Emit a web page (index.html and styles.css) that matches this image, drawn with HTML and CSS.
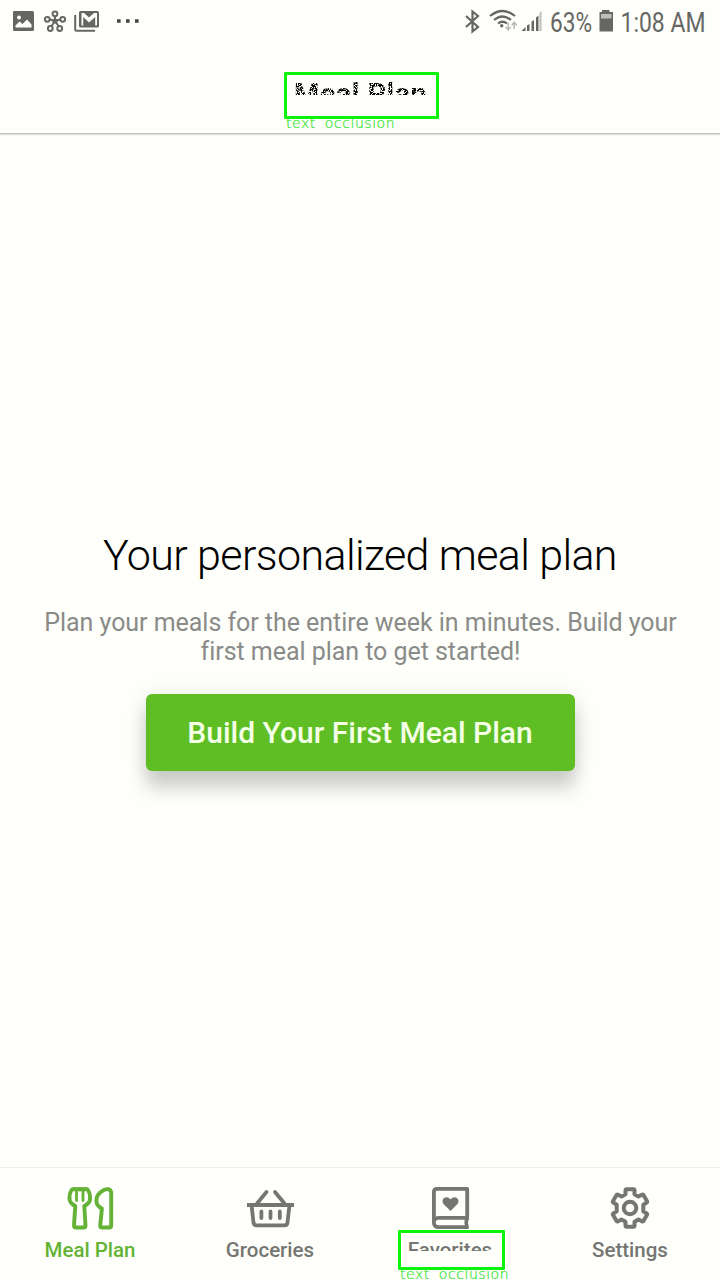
FILE: index.html
```
<!DOCTYPE html>
<html lang="en">
<head>
<meta charset="utf-8">
<meta name="viewport" content="width=device-width, initial-scale=1">
<title>Meal Plan</title>
<link rel="stylesheet" href="styles.css">
</head>
<body>
<svg class="defs" width="0" height="0">
  <filter id="speckle" x="0" y="0" width="100%" height="100%" color-interpolation-filters="sRGB">
    <feTurbulence type="fractalNoise" baseFrequency="0.85" numOctaves="1" seed="4"/>
    <feColorMatrix values="0 0 0 0 0  0 0 0 0 0  0 0 0 0 0  12 0 0 0 -5"/>
    <feComposite in2="SourceAlpha" operator="in"/>
  </filter>
</svg>
<div class="app">
  <header class="top">
    <div class="status">
      <svg class="status-left" width="150" height="44" viewBox="0 0 150 44" fill="none" stroke="#666765">
        <path fill="#666765" stroke="none" fill-rule="evenodd" d="M14 11h18.500a1.500 1.500 0 0 1 1.500 1.500v17a1.500 1.500 0 0 1-1.500 1.500H14.500a1.500 1.500 0 0 1-1.500-1.500v-17a1.500 1.500 0 0 1 1-1.500zM15.500 27.500h16v-3l-4.500-5-4.500 4.500-3-2.500-4 4zM19 15.500a2 2 0 1 0 0 4 2 2 0 0 0 0-4z"/>
        <g stroke-width="2">
          <path d="M55 21v-4M55 21l-5-1.500M55 21l5-1.500M55 21l-3.500 5M55 21l3.500 5"/>
          <circle cx="55" cy="13.800" r="2.400"/><circle cx="47.300" cy="19.300" r="2.400"/><circle cx="62.700" cy="19.300" r="2.400"/><circle cx="50.300" cy="28.500" r="2.400"/><circle cx="59.700" cy="28.500" r="2.400"/>
          <circle cx="55" cy="21" r="1.600" fill="#666765"/>
        </g>
        <path stroke-width="2" d="M75.200 15v14.500q0 1.300 1.300 1.300H95"/>
        <rect x="79" y="11" width="20" height="16.500" rx="1.500" fill="#666765" stroke="none"/>
        <path fill="#fefffa" stroke="none" d="M81.500 13h2.500l5 4.500 5-4.500h3v12.500h-1.800V17L89 22.500 83.200 17v8.500h-1.700z"/>
        <path fill="#444" stroke="none" d="M117 19.200h3.600v3.600H117zM126 19.200h3.600v3.600H126zM135 19.200h3.600v3.600H135z"/>
      </svg>
      <svg class="status-right" width="270" height="44" viewBox="450 0 270 44" fill="none" stroke="#666765">
        <path stroke-width="2.200" d="M466 16l12 11-5.500 4.500v-20L478 16l-12 11"/>
        <path stroke-width="2.200" d="M490 16q12.500-10 25 0M494 20q8.500-7 17 0M498 23.500q4.500-3.500 9 0"/>
        <circle cx="501.700" cy="25.700" r="1.700" fill="#666765" stroke="none"/>
        <path stroke="#b8b9b6" stroke-width="1.500" d="M508.200 22.500v7M505.600 27l2.600 2.800 2.600-2.800M514.200 29v-6.500M511.600 25.200l2.600-2.800 2.600 2.800"/>
        <path fill="#666765" stroke="none" d="M521.500 31l4-4v4zM527 25.500l2.500-1.500v7H527zM531.500 21.500l2.500-1.500v11h-2.500zM536 17.500l2.500-2v15.500H536z"/>
        <path fill="#bebfbc" stroke="none" d="M539.500 13l2-2v20h-2z"/>
        <text class="status-text" x="550" y="31.500" textLength="42" lengthAdjust="spacingAndGlyphs">63%</text>
        <path fill="#666765" stroke="none" d="M602 10h7.500v2h3.500v19.500h-13.500V12h2.500z"/>
        <path fill="#bebfbc" stroke="none" d="M601 14h10.500v4.500H601z"/>
        <text class="status-text" x="620.500" y="31.500" textLength="85" lengthAdjust="spacingAndGlyphs">1:08 AM</text>
      </svg>
    </div>
    <div class="title-clip"><h1 class="title">Meal Plan</h1></div>
    <div class="mark mark-title"><span class="mark-label">text occlusion</span></div>
  </header>
  <main class="content">
    <h2 class="heading">Your personalized meal plan</h2>
    <p class="desc">Plan your meals for the entire week in minutes. Build your<br>first meal plan to get started!</p>
    <button class="cta" type="button">Build Your First Meal Plan</button>
  </main>
  <nav class="tabs">
    <a class="tab active">
      <svg width="60" height="48" viewBox="60 1184 60 48" fill="none" stroke="#65b336" stroke-width="3.900" stroke-linejoin="round" stroke-linecap="round">
        <path d="M72 1189.500q-3.500 5-2.200 11 1 3.500 5.500 5.500L74 1225.500q0 2 2 2h7.500q2 0 2-2L84.300 1206q4.500-2 5.500-5.500 1.200-6-2.200-11-2.200-1.200-3.600.2-2-1.500-4-.2-2-1.300-4 .2-1.600-1.400-4-.2z"/>
        <path stroke-width="2.800" d="M76.500 1190v10.500M83 1190v10.500"/>
        <path d="M111.200 1192v33.500q0 2-2 2h-7q-2 0-2-2l1.700-17q-5.500-2.500-5.500-8 0-6.500 7.500-10.500 5.500-2.500 7.300 2z"/>
      </svg>
      <span class="tab-name">Meal Plan</span>
    </a>
    <a class="tab">
      <svg width="60" height="48" viewBox="240 1184 60 48" fill="none" stroke="#757673" stroke-width="3.800">
        <path d="M247 1205h47M251.500 1205l2 17.500q.3 2.800 3 2.800h28q2.700 0 3-2.800l2-17.500"/>
        <path stroke-linecap="round" d="M257 1203.500l9.500-11.500M284.500 1203.500l-9.500-11.500M261.400 1211.500v6.500M270.500 1211.500v6.500M279.800 1211.500v6.500"/>
      </svg>
      <span class="tab-name">Groceries</span>
    </a>
    <a class="tab">
      <svg width="60" height="48" viewBox="420 1184 60 48" fill="none" stroke="#757673" stroke-width="3.800">
        <path stroke-linejoin="round" d="M467.200 1217.800V1188.900H437q-3.100 0-3.100 3.100v30.500q0 4.700 4.700 4.700h30.100M469 1217.800h-30.500q-4.600 0-4.600 4.700M466.800 1218q-1.200 4.500 0 9"/>
        <path fill="#757673" stroke="none" d="M450.500 1211l-7-7q-2-3 0-5.500 3.500-3 7 .700 3.500-3.700 7-.700 2 2.500 0 5.500z"/>
      </svg>
      <span class="tab-name cut">Favorites</span>
    </a>
    <a class="tab">
      <svg width="60" height="48" viewBox="600 1184 60 48" fill="none" stroke="#757673" stroke-width="4" stroke-linejoin="round">
        <path d="M625.500 1190.500q0-1.200 1.200-1.200h6.600q1.200 0 1.200 1.200v3.700l4 2.300 3.300-1.700q1.200-.6 1.800.5l3.300 5.700q.6 1-.4 1.700l-3.200 2v6.600l3.200 2q1 .7.400 1.700l-3.300 5.700q-.6 1.100-1.800.5l-3.300-1.700-4 2.300v3.700q0 1.200-1.200 1.200h-6.600q-1.200 0-1.200-1.200v-3.700l-4-2.300-3.300 1.700q-1.200.6-1.800-.5l-3.300-5.700q-.6-1 .4-1.700l3.200-2v-6.600l-3.200-2q-1-.7-.4-1.700l3.300-5.700q.6-1.100 1.800-.5l3.300 1.700 4-2.300z"/>
        <circle cx="630" cy="1208" r="6.300"/>
      </svg>
      <span class="tab-name">Settings</span>
    </a>
    <div class="mark mark-tab"><span class="mark-label">text occlusion</span></div>
  </nav>
</div>
</body>
</html>
```
FILE: styles.css
```
* { box-sizing: border-box; }
body { margin: 0; background: #fefffa; font-family: Roboto, "Liberation Sans", sans-serif; }
.defs { position: absolute; }
.app { width: 720px; height: 1280px; display: flex; flex-direction: column; overflow: hidden; }
.top { position: relative; height: 134px; flex: none; border-bottom: 1px solid #c4c5c2; box-shadow: 0 1px 1px #dcddd9; }
.status { display: flex; justify-content: space-between; height: 44px; }
.status-text { font-family: Roboto, sans-serif; font-size: 27px; fill: #666765; stroke: none; }
.title-clip { width: 136px; height: 19px; margin: 32px auto 0; clip-path: inset(0); padding-left: 2px; }
.title {
  margin: 0; font-size: 29px; line-height: 36px; font-weight: 700;
  white-space: nowrap; letter-spacing: .4px; color: #000; filter: url(#speckle);
}
.mark { position: absolute; border: 3px solid #0cf40c; border-radius: 1px; }
.mark-title { left: 284px; top: 72px; width: 155px; height: 47px; }
.mark-tab { left: 398px; top: 62px; width: 107px; height: 40px; }
.mark-label {
  position: absolute; left: -1px; top: 100%; font: 200 14px/14px "DejaVu Sans", sans-serif;
  color: #1fe81f; -webkit-text-stroke: .2px #2fe02f; letter-spacing: .55px; white-space: nowrap; word-spacing: 4px;
}
.content { flex: 1; display: flex; flex-direction: column; align-items: center; text-align: center; padding-top: 395px; }
.heading { margin: 0; font-size: 43px; font-weight: 300; line-height: 52px; letter-spacing: -.62px; color: #000; white-space: nowrap; }
.desc { margin: 27px 0 0; font-size: 25px; line-height: 29px; letter-spacing: -.04px; padding-left: 1px; color: #8a8b88; white-space: nowrap; }
.cta {
  margin-top: 28px; width: 429px; height: 77px; padding: 0; border: 0; border-radius: 6px;
  background: #5ebe23; color: #f4ffe6; font: 500 30px/77px Roboto, sans-serif;
  box-shadow: 0 18px 18px 0 rgba(0,0,0,.16), 0 3px 22px rgba(0,0,0,.1);
}
.tabs { position: relative; height: 113px; flex: none; display: flex; border-top: 1px solid #eeefeb; }
.tab { flex: 1; display: flex; flex-direction: column; align-items: center; padding-top: 16px; color: #757673; }
.tab svg { display: block; }
.tab-name { margin-top: 6px; font-size: 20.500px; line-height: 24px; font-weight: 500; white-space: nowrap; }
.active { color: #65b336; }
.cut { clip-path: inset(0 0 11px 0); }
```
